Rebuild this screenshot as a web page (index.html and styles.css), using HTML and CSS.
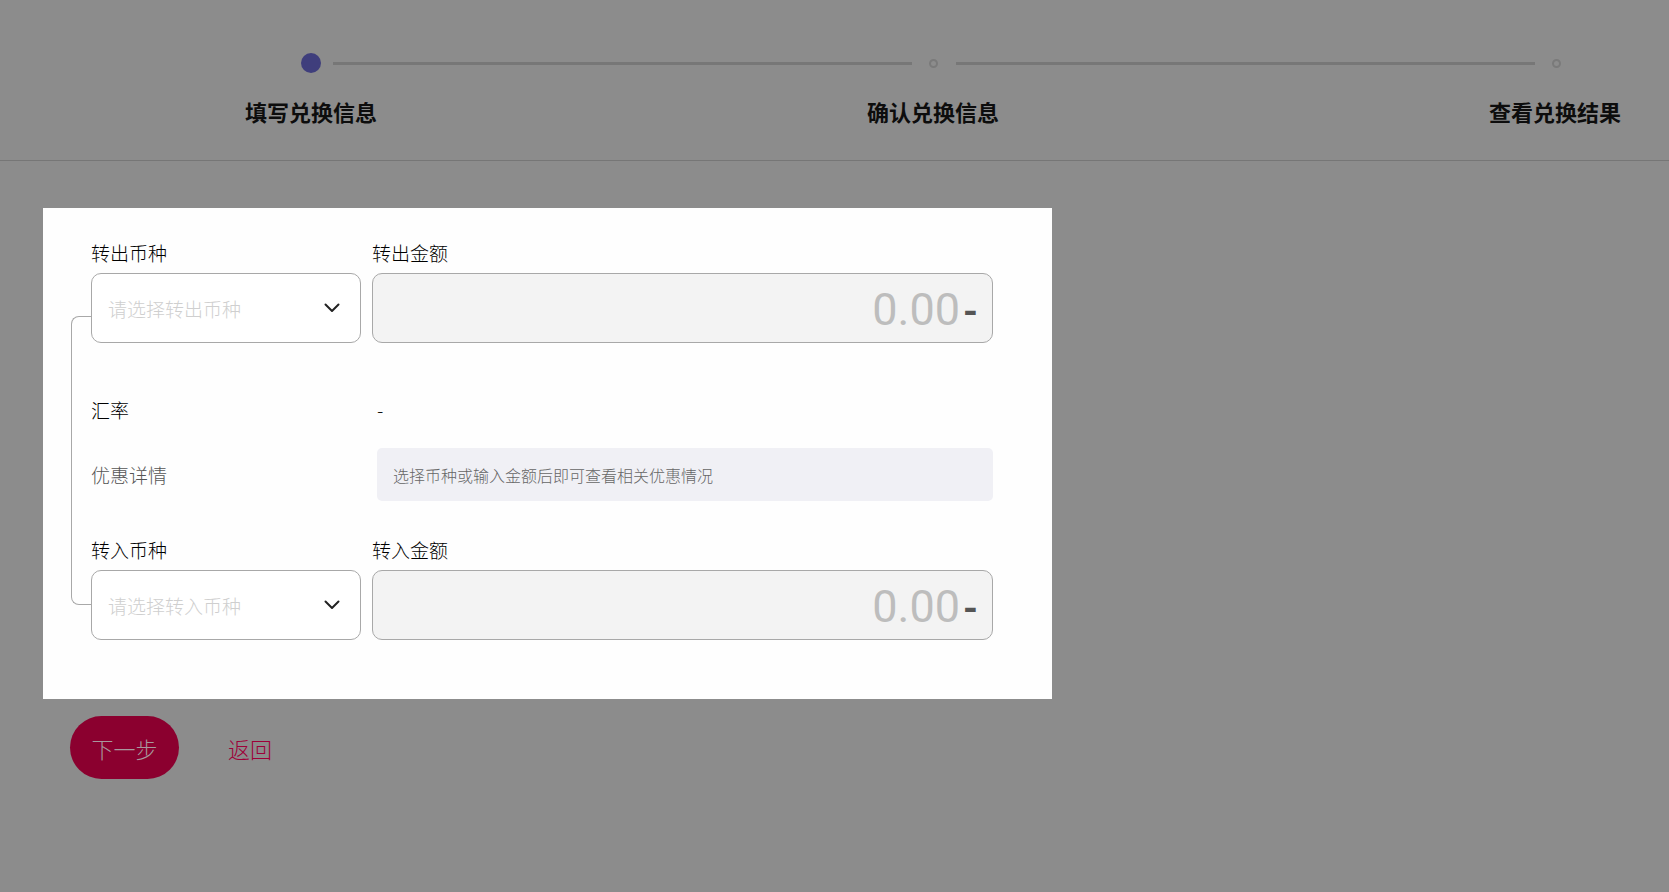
FILE: index.html
```html
<!DOCTYPE html>
<html lang="zh-CN">
<head>
    <meta charset="UTF-8">
    <meta name="viewport" content="width=device-width, initial-scale=1.0">
    <title>货币兑换</title>
    <link rel="stylesheet" href="styles.css">
</head>
<body>
    <header class="steps">
        <div class="steps-track">
            <span class="step-dot active"></span>
            <span class="step-line"></span>
            <span class="step-dot"></span>
            <span class="step-line"></span>
            <span class="step-dot"></span>
        </div>
        <div class="steps-titles">
            <div class="step-title">填写兑换信息</div>
            <div class="step-title">确认兑换信息</div>
            <div class="step-title">查看兑换结果</div>
        </div>
    </header>

    <main>
        <section class="exchange-card">
            <div class="exchange-form">
                <!-- links the two currency pickers -->
                <span class="pair-bracket"></span>

                <div class="field-row">
                    <div class="field">
                        <label class="field-label">转出币种</label>
                        <div class="select">
                            <span class="placeholder">请选择转出币种</span>
                            <svg class="chevron" width="16" height="10" viewBox="0 0 16 10">
                                <polyline points="1.5,1.5 8,8 14.5,1.5" fill="none" stroke="#222" stroke-width="2" stroke-linecap="round" stroke-linejoin="round"/>
                            </svg>
                        </div>
                    </div>
                    <div class="field">
                        <label class="field-label">转出金额</label>
                        <div class="amount">
                            <span class="amount-value">0.00</span><span class="amount-unit">-</span>
                        </div>
                    </div>
                </div>

                <div class="info-row rate-row">
                    <span class="info-label">汇率</span>
                    <span class="info-value">-</span>
                </div>

                <div class="info-row promo-row">
                    <span class="info-label muted">优惠详情</span>
                    <div class="promo-box">选择币种或输入金额后即可查看相关优惠情况</div>
                </div>

                <div class="field-row">
                    <div class="field">
                        <label class="field-label">转入币种</label>
                        <div class="select">
                            <span class="placeholder">请选择转入币种</span>
                            <svg class="chevron" width="16" height="10" viewBox="0 0 16 10">
                                <polyline points="1.5,1.5 8,8 14.5,1.5" fill="none" stroke="#222" stroke-width="2" stroke-linecap="round" stroke-linejoin="round"/>
                            </svg>
                        </div>
                    </div>
                    <div class="field">
                        <label class="field-label">转入金额</label>
                        <div class="amount">
                            <span class="amount-value">0.00</span><span class="amount-unit">-</span>
                        </div>
                    </div>
                </div>
            </div>
        </section>

        <div class="actions">
            <button class="btn-next">下一步</button>
            <a href="#" class="btn-back">返回</a>
        </div>
    </main>
</body>
</html>
```

FILE: styles.css
```css
body {
    margin: 0;
    padding: 0;
    background-color: #8c8c8c;
    font-family: "Noto Sans CJK SC", "Noto Sans", sans-serif;
    color: #111;
}

/* steps header */
.steps {
    border-bottom: 1px solid #767676;
    padding: 53px 0 34px;
}

.steps-track {
    display: flex;
    align-items: center;
    padding-left: 301px;
}

.step-dot {
    width: 9px;
    height: 9px;
    box-sizing: border-box;
    border: 2px solid #7a7a7a;
    border-radius: 50%;
}

.step-dot.active {
    width: 20px;
    height: 20px;
    border: none;
    background-color: #3f3e7c;
    margin-right: 12px;
}

.step-line {
    width: 579px;
    height: 3px;
    background-color: #777;
    margin-right: 17px;
}

.step-dot + .step-line {
    margin-left: 18px;
}

.step-dot.active + .step-line {
    margin-left: 0;
}

.steps-titles {
    display: grid;
    grid-template-columns: repeat(3, 200px);
    column-gap: 422px;
    padding-left: 211px;
    margin-top: 23px;
}

.step-title {
    text-align: center;
    font-size: 22px;
    font-weight: bold;
    line-height: 30px;
    color: #0d0d0d;
}

/* form card */
main {
    padding-top: 47px;
}

.exchange-card {
    width: 1009px;
    margin-left: 43px;
    box-sizing: border-box;
    padding: 32px 59px 59px 48px;
    background-color: #fefefe;
}

.exchange-form {
    position: relative;
}

.pair-bracket {
    position: absolute;
    left: -20px;
    top: 76px;
    width: 20px;
    height: 289px;
    box-sizing: border-box;
    border: 1px solid #a8a8a8;
    border-right: none;
    border-radius: 8px 0 0 8px;
}

.field-row {
    display: grid;
    grid-template-columns: 270px 1fr;
    column-gap: 11px;
}

.field-label {
    display: block;
    font-size: 19px;
    font-weight: 300;
    line-height: 26px;
    margin-bottom: 7px;
    color: #000;
}

.select {
    position: relative;
    height: 70px;
    box-sizing: border-box;
    border: 1px solid #a8a8a8;
    border-radius: 10px;
    background-color: #fff;
    display: flex;
    align-items: center;
    justify-content: space-between;
    padding: 0 20px 0 16px;
}

.placeholder {
    font-size: 19px;
    font-weight: 300;
    color: #cfcfcf;
}

.chevron {
    display: block;
}

.amount {
    height: 70px;
    box-sizing: border-box;
    border: 1px solid #a8a8a8;
    border-radius: 10px;
    background-color: #f3f3f3;
    display: flex;
    align-items: baseline;
    justify-content: flex-end;
    padding: 6px 14px 0 0;
    font-family: Roboto, "Liberation Sans", sans-serif;
    font-size: 45px;
    line-height: 60px;
}

.amount-value {
    color: #bdbdbd;
}

.amount-unit {
    color: #555;
    font-size: 38px;
    font-weight: bold;
    margin-left: 3px;
    vertical-align: 7px;
}

.info-row {
    display: grid;
    grid-template-columns: 286px 1fr;
    align-items: center;
    font-size: 19px;
    font-weight: 300;
}

.rate-row {
    line-height: 26px;
    margin-top: 54px;
}

.promo-row {
    margin-top: 25px;
    margin-bottom: 36px;
}

.info-label {
    color: #000;
}

.info-label.muted {
    color: #555;
}

.info-value {
    color: #111;
}

.promo-box {
    height: 53px;
    box-sizing: border-box;
    padding: 0 16px;
    border-radius: 5px;
    background-color: #f0f0f5;
    display: flex;
    align-items: center;
    font-size: 16px;
    color: #666;
}

/* bottom buttons */
.actions {
    display: flex;
    align-items: center;
    padding-left: 70px;
    margin-top: 17px;
}

.btn-next {
    width: 109px;
    height: 63px;
    border: none;
    border-radius: 32px;
    background-color: #8b002f;
    color: #a8989d;
    font-family: inherit;
    font-size: 22px;
    font-weight: 300;
    cursor: pointer;
}

.btn-back {
    margin-left: 49px;
    font-size: 22px;
    font-weight: 300;
    color: #9e0038;
    text-decoration: none;
}
```
